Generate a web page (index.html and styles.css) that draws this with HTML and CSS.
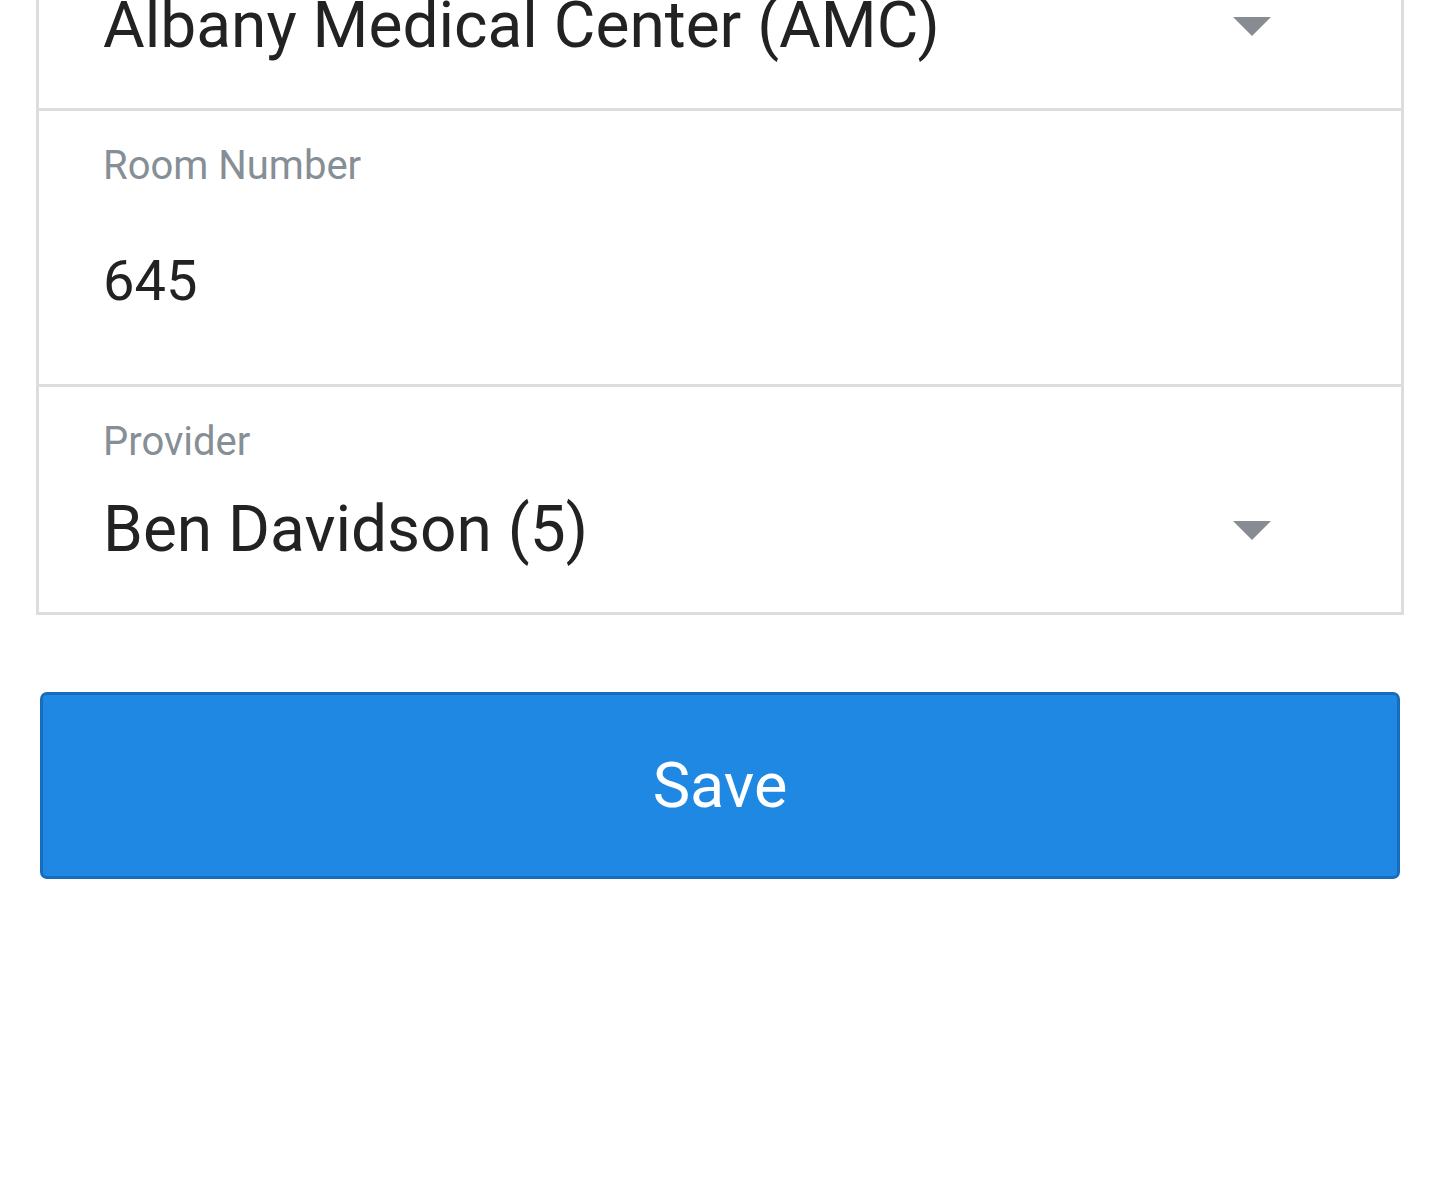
FILE: index.html
```html
<!DOCTYPE html>
<html lang="en">
<head>
<meta charset="utf-8">
<title>Edit Visit</title>
<link rel="stylesheet" href="styles.css">
</head>
<body>
<main class="page">
  <div class="form">
    <div class="field field-first">
      <div class="select-row">
        <span class="value">Albany Medical Center (AMC)</span>
        <span class="caret"></span>
      </div>
    </div>
    <div class="field field-input">
      <div class="label">Room Number</div>
      <div class="input-value">645</div>
    </div>
    <div class="field">
      <div class="label">Provider</div>
      <div class="select-row">
        <span class="value">Ben Davidson (5)</span>
        <span class="caret"></span>
      </div>
    </div>
  </div>
  <button class="save-btn" type="button">Save</button>
</main>
</body>
</html>
```

FILE: styles.css
```css
html, body {
  margin: 0;
  padding: 0;
  background: #ffffff;
}

body {
  font-family: Roboto, "Noto Sans", "Liberation Sans", sans-serif;
  color: #222222;
}

.page {
  padding: 0 36px;
  display: flex;
  flex-direction: column;
}

.form {
  margin-top: -12px;
  border: 3px solid #dcdddf;
  border-top: none;
  display: flex;
  flex-direction: column;
}

.field {
  padding: 31px 129px 44px 64px;
  border-top: 3px solid #dcdddf;
}

.field-first {
  padding-top: 0;
  border-top: none;
}

.label {
  font-size: 40px;
  line-height: 48px;
  color: #868e96;
}

.select-row {
  display: flex;
  align-items: center;
  justify-content: space-between;
  margin-top: 26px;
}

.field-first .select-row {
  margin-top: 0;
}

.value {
  font-size: 64px;
  line-height: 76px;
  color: #222222;
  white-space: nowrap;
}

.caret {
  width: 0;
  height: 0;
  margin-right: 1px;
  border-left: 19.5px solid transparent;
  border-right: 19.5px solid transparent;
  border-top: 19.5px solid #878c92;
}

.input-value {
  margin-top: 57px;
  font-size: 56px;
  line-height: 68px;
  color: #222222;
}

.field-input {
  padding-bottom: 69px;
}

.save-btn {
  margin: 77px 4px 0;
  height: 187px;
  background: #1e88e2;
  border: 3px solid #186cbd;
  border-radius: 7px;
  color: #ffffff;
  font-family: Roboto, "Noto Sans", "Liberation Sans", sans-serif;
  font-size: 63px;
  display: flex;
  align-items: center;
  justify-content: center;
  padding: 0;
}
```
